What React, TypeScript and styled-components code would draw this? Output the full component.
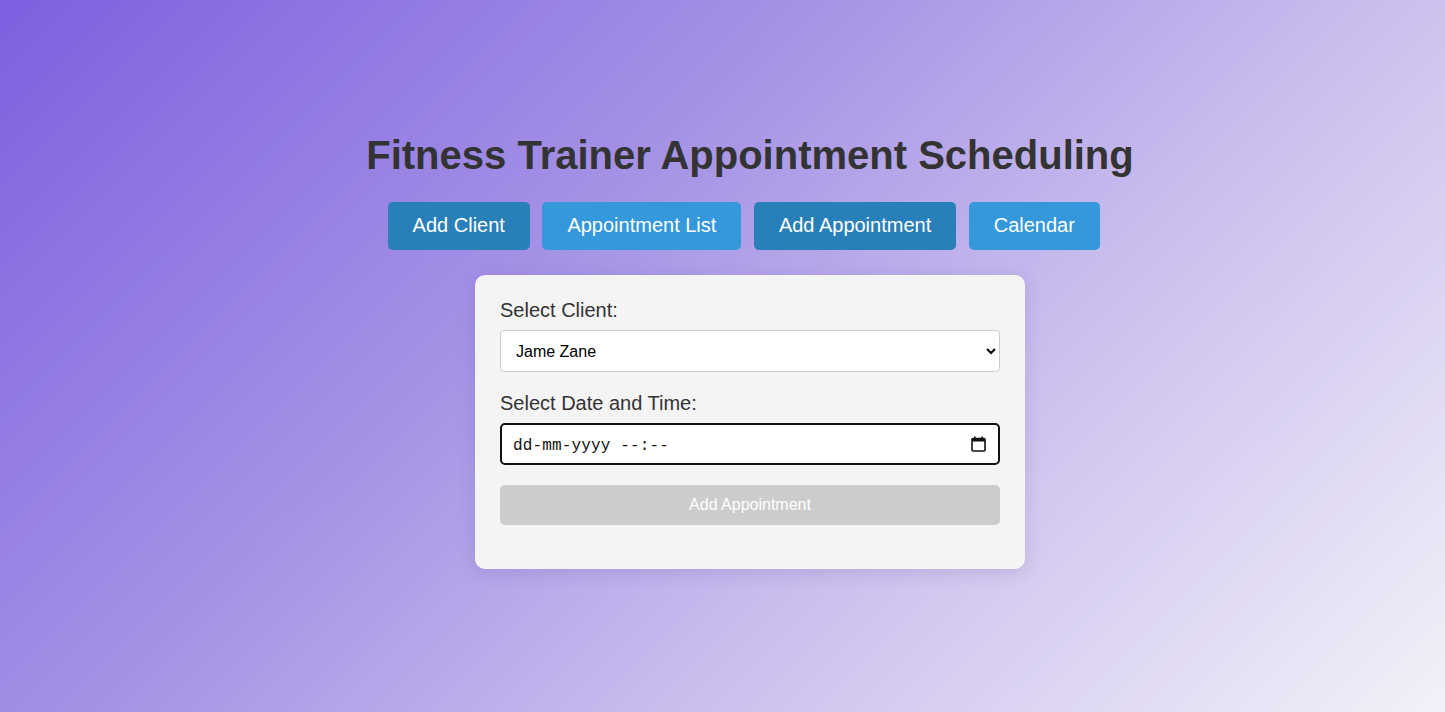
import React from "react";
import styled, { createGlobalStyle } from "styled-components";

const GlobalStyle = createGlobalStyle`
  html, body { margin: 0; padding: 0; }
  body { font-family: "Liberation Sans", Arial, sans-serif; }
  * { box-sizing: border-box; }
`;

const Page = styled.div`
  min-height: 712px;
  height: 712px;
  overflow: hidden;
  background: linear-gradient(135deg, #7d5fe0 0%, #a896e6 40%, #cbbfee 65%, #f3f1f8 100%);
  padding: 132px 0 0 55px;
  display: flex;
  flex-direction: column;
  align-items: center;
`;

const Title = styled.h1`
  margin: 0 0 24px;
  font-size: 40px;
  line-height: 46px;
  font-weight: 700;
  color: #333;
`;

const Nav = styled.nav`
  display: flex;
  margin-bottom: 25px;
`;

const NavButton = styled.button<{ $active?: boolean }>`
  font-family: "Liberation Sans", Arial, sans-serif;
  font-size: 20px;
  line-height: 23px;
  padding: 12px 25px 13px;
  margin-right: 12.5px;
  border: none;
  border-radius: 5px;
  color: #fff;
  background: ${(p) => (p.$active ? "#2980b9" : "#3498db")};
  cursor: pointer;
`;

const Card = styled.div`
  width: 550px;
  background: #f4f4f4;
  border-radius: 10px;
  padding: 24px 25px 24px;
  box-shadow: 0 4px 18px rgba(60, 40, 120, 0.15);
`;

const Group = styled.div`
  margin-bottom: 20px;
`;

const Label = styled.label`
  display: block;
  font-size: 20px;
  line-height: 23px;
  color: #333;
  margin-bottom: 8px;
`;

const Select = styled.select`
  display: block;
  width: 100%;
  height: 42px;
  padding: 0 10px 0 11px;
  font-family: "Liberation Sans", Arial, sans-serif;
  font-size: 16px;
  color: #000;
  background: #fff;
  border: 1px solid #ccc;
  border-radius: 4px;
`;

const DateBox = styled.div`
  display: flex;
  align-items: center;
  justify-content: space-between;
  width: 100%;
  height: 42px;
  padding: 0 12px 0 11px;
  background: #fff;
  border: 2px solid #101010;
  border-radius: 5px;
  font-family: "Liberation Mono", "DejaVu Sans Mono", monospace;
  font-size: 16px;
  color: #111;
`;

const DateText = styled.span`
  white-space: pre;
  letter-spacing: 0.15px;
  padding-top: 4px;
`;

const SubmitButton = styled.button`
  display: block;
  width: 100%;
  height: 40px;
  border: none;
  border-radius: 5px;
  background: #ccc;
  color: #fff;
  font-family: "Liberation Sans", Arial, sans-serif;
  font-size: 16px;
  margin-bottom: 20px;
`;

const CalendarIcon = () => (
  <svg width="15" height="16" viewBox="0 0 15 16" aria-hidden="true">
    <rect x="3" y="0.5" width="1.6" height="3" fill="#111" />
    <rect x="10.4" y="0.5" width="1.6" height="3" fill="#111" />
    <rect x="1" y="2.5" width="13" height="12.5" rx="1" fill="none" stroke="#111" strokeWidth="1.6" />
    <rect x="1" y="2.5" width="13" height="3" fill="#111" />
  </svg>
);

export default function App() {
  return (
    <>
      <GlobalStyle />
      <Page>
        <Title>Fitness Trainer Appointment Scheduling</Title>
        <Nav>
          <NavButton $active>Add Client</NavButton>
          <NavButton>Appointment List</NavButton>
          <NavButton $active>Add Appointment</NavButton>
          <NavButton>Calendar</NavButton>
        </Nav>
        <Card>
          <Group>
            <Label>Select Client:</Label>
            <Select defaultValue="jame">
              <option value="jame">Jame Zane</option>
            </Select>
          </Group>
          <Group>
            <Label>Select Date and Time:</Label>
            <DateBox>
              <DateText>dd-mm-yyyy --:--</DateText>
              <CalendarIcon />
            </DateBox>
          </Group>
          <SubmitButton disabled>Add Appointment</SubmitButton>
        </Card>
      </Page>
    </>
  );
}
